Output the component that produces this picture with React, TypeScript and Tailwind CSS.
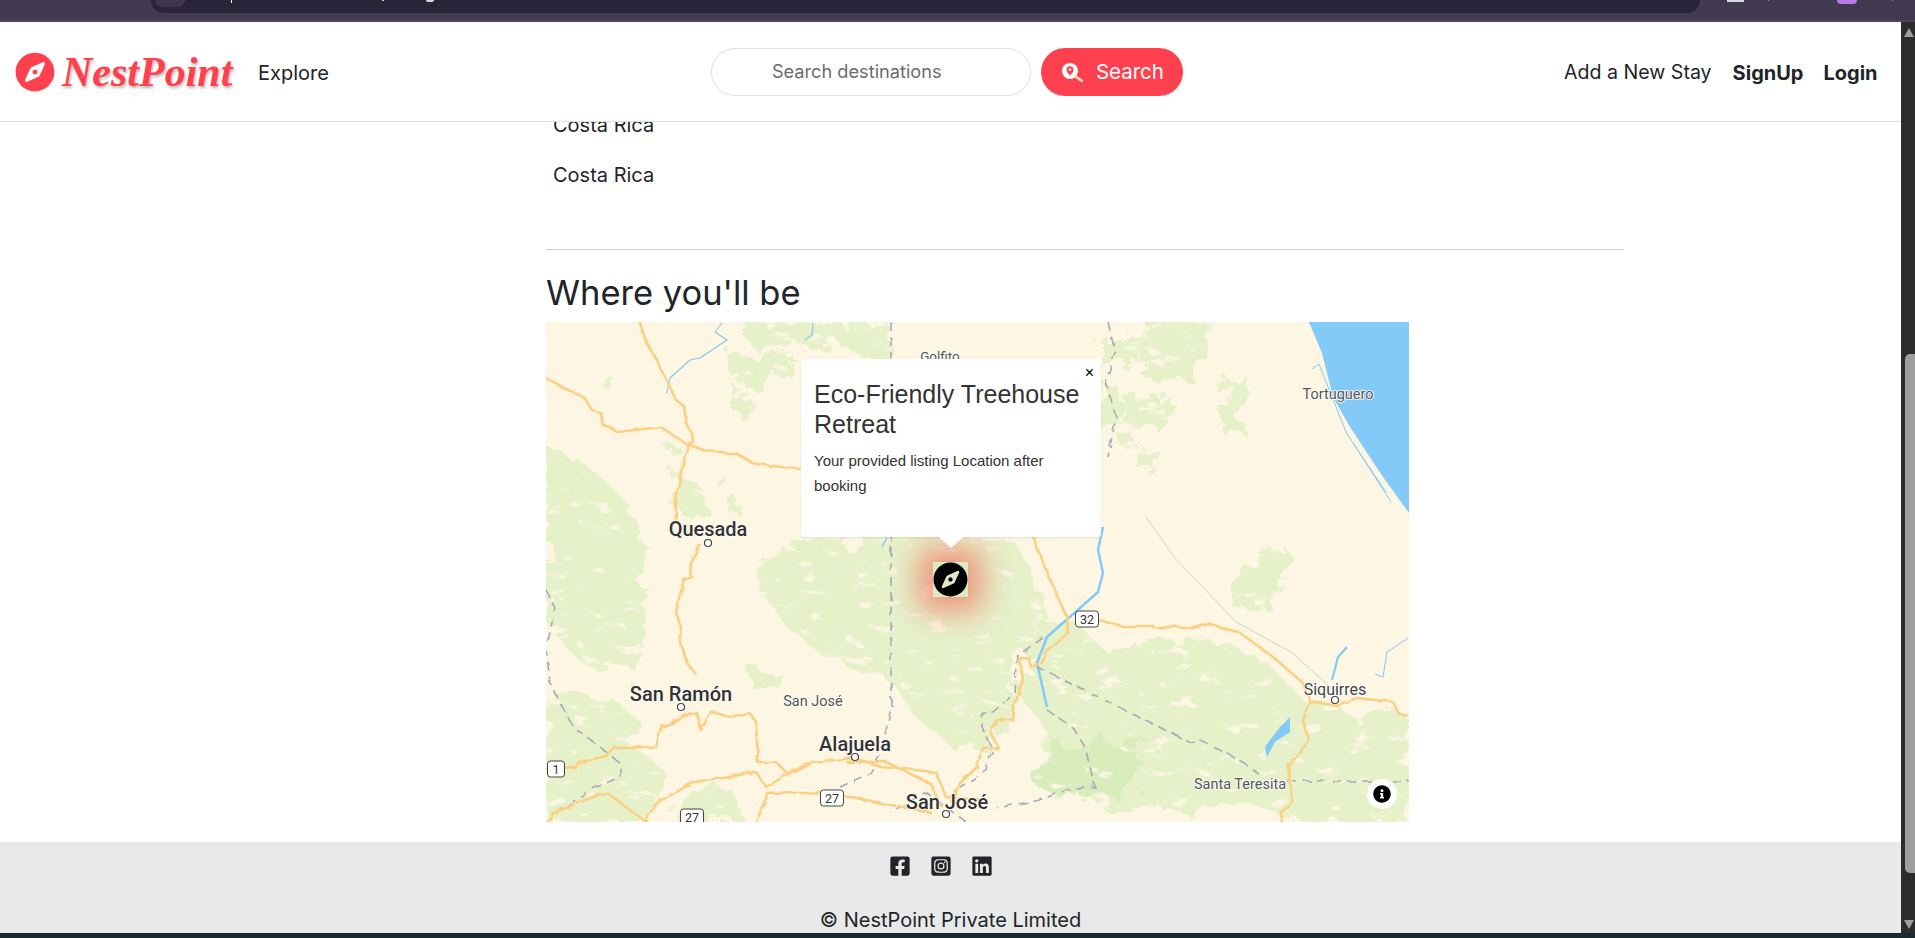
import React from "react";
import {
  FaCompass,
  FaFacebookSquare,
  FaInfoCircle,
  FaInstagramSquare,
  FaLinkedin,
} from "react-icons/fa";

// map drawing, coordinates are local to the 863x500 map box
const greens = [
  "0,125 30,135 60,160 85,185 100,225 95,270 100,310 85,345 70,355 40,345 15,320 0,300",
  "0,385 25,365 50,375 75,385 95,400 80,420 110,440 120,470 90,500 0,500",
  "181,31 247,31 240,50 210,65 190,60",
  "194,1 294,1 280,20 240,28 205,25",
  "190,68 200,68 200,95 190,95",
  "277,1 345,1 345,38 300,30",
  "60,55 68,55 68,68 60,68",
  "120,120 130,120 132,128 122,130",
  "168,152 178,152 176,162 168,162",
  "184,180 196,180 198,195 186,195",
  "210,235 270,215 300,222 345,205 385,200 415,215 470,220 495,270 500,310 470,340 465,400 440,425 400,420 370,395 345,360 320,350 280,335 240,305 215,270",
  "554,18 597,18 597,42 554,42",
  "597,0 664,0 660,30 640,58 600,58",
  "554,60 572,60 575,100 554,110",
  "679,55 704,55 700,85 682,85",
  "674,86 697,86 697,111 674,111",
  "574,78 627,78 625,105 580,105",
  "591,125 609,125 609,148 591,148",
  "576,116 590,116 590,128 578,128",
  "495,300 530,300 560,330 600,320 660,315 720,340 760,380 863,395 863,500 745,500 700,480 640,490 560,490 540,470 500,450 495,400 470,370",
  "130,150 160,170 150,200 125,185",
  "205,345 230,345 235,365 210,370",
  "130,475 185,465 200,500 125,500",
  "690,250 740,225 750,240 720,285 690,290",
  "270,250 300,240 320,280 285,290",
];

const darkGreens = ["508,425 600,415 590,465 530,480 490,465"];

const roads = [
  "94,0 100,20 112,40 122,62 130,78 138,84 140,100 146,112 147,120 142,122",
  "0,56 25,70 38,75 46,88 56,92 56,102 72,110 115,105 140,122 160,128 190,132 210,142 255,147 300,150",
  "142,122 135,150 130,180 130,195 128,202",
  "155,222 144,240 146,255 138,258 132,280 130,290 136,310 134,320 140,340 150,352",
  "0,447 30,445 35,440 60,434 68,425 110,425 115,405 140,395 150,390 155,408 165,390 185,395 205,392 210,400 212,440 230,440 242,452",
  "100,500 108,482 145,462 210,450 220,465 242,452 265,440 310,436 335,445 390,450 400,475 440,478",
  "210,500 222,472 280,470 340,482 385,490",
  "300,440 340,440 385,462 395,485",
  "487,215 497,241 521,296 522,311 500,331 494,341 484,345 483,335 474,338 477,358 467,388 466,398 451,398 444,408 452,425 437,426 431,445 414,461 405,480",
  "553,298 577,305 647,305 661,301 694,311 727,335 757,361 764,380 791,383 811,376 847,380 854,393 863,394",
  "764,381 757,398 762,418 742,445 747,481 734,491 736,500",
  "0,500 10,490 60,470 100,500",
];

const rivers = [
  { d: "176,1 169,10 181,18 154,36 144,38 124,56 121,71", w: 1.2 },
  { d: "267,1 266,13 259,18", w: 1.2 },
  { d: "341,215 336,225", w: 1.5 },
  { d: "557,205 552,228 557,251 552,270 534,286 501,315 491,341 501,385", w: 2.5 },
  { d: "801,325 792,335 786,358", w: 2.2 },
  { d: "862,316 841,330 837,355 829,352", w: 1 },
  { d: "766,47 773,42 800,110 845,180", w: 1 },
  { d: "807,121 840,170", w: 1 },
];

const borders = [
  "345,0 345,391 337,428 324,451 294,465",
  "562,0 569,30 560,60 570,95 562,135",
  "491,345 644,420 654,418 681,431 704,445 717,456",
  "741,459 863,459",
  "501,388 527,406 539,425 549,465 521,468 494,478 451,486",
  "497,316 472,333 469,371 447,390 436,390 436,405 447,428 437,451 414,465",
  "0,268 9,285 4,311 0,325 4,361 27,405 54,425 74,441 74,455 44,468 4,495",
  "420,500 380,470 345,490",
];

const dots = [
  [162, 221],
  [135, 385],
  [309, 435],
  [400, 492],
  [789, 378],
];

const shields = [
  { x: 10, y: 447, label: "1", w: 17 },
  { x: 286, y: 476, label: "27", w: 23 },
  { x: 146, y: 495, label: "27", w: 23 },
  { x: 541, y: 297, label: "32", w: 23 },
];

const labels = [
  { x: 162, y: 214, t: "Quesada", s: 20, w: 500, c: "#333333" },
  { x: 135, y: 379, t: "San Ramón", s: 20, w: 500, c: "#333333" },
  { x: 267, y: 384, t: "San José", s: 14.5, w: 400, c: "#555555" },
  { x: 309, y: 429, t: "Alajuela", s: 20, w: 500, c: "#333333" },
  { x: 401, y: 487, t: "San José", s: 20, w: 500, c: "#333333" },
  { x: 789, y: 373, t: "Siquirres", s: 16, w: 400, c: "#444444" },
  { x: 694, y: 467, t: "Santa Teresita", s: 14.5, w: 400, c: "#555555" },
  { x: 792, y: 77, t: "Tortuguero", s: 14.5, w: 400, c: "#555555" },
  { x: 394, y: 39, t: "Golfito", s: 13.5, w: 400, c: "#555555" },
];

function MapArt() {
  return (
    <svg width="863" height="500" viewBox="0 0 863 500" className="block">
      <defs>
        {/* ragged terrain edges with cream streaks showing through */}
        <filter id="rough" x="-5%" y="-5%" width="110%" height="110%" colorInterpolationFilters="sRGB">
          <feTurbulence type="fractalNoise" baseFrequency="0.05" numOctaves="4" seed="4" result="n" />
          <feDisplacementMap in="SourceGraphic" in2="n" scale="34" result="d" />
          <feTurbulence type="fractalNoise" baseFrequency="0.04 0.09" numOctaves="4" seed="9" />
          <feColorMatrix values="0 0 0 0 0 0 0 0 0 0 0 0 0 0 0 0 0 0 9 -2.300" result="m" />
          <feComposite in="d" in2="m" operator="in" />
        </filter>
        <filter id="wiggle" x="-5%" y="-5%" width="110%" height="110%" colorInterpolationFilters="sRGB">
          <feTurbulence type="fractalNoise" baseFrequency="0.09" numOctaves="2" seed="2" />
          <feDisplacementMap in="SourceGraphic" scale="5" />
        </filter>
      </defs>
      <rect width="863" height="500" fill="#fcf6e3" />
      <g filter="url(#rough)" fill="#e6f1ca">
        {greens.map((p) => (
          <polygon key={p} points={p} />
        ))}
      </g>
      <g filter="url(#rough)" fill="#d9ecbc">
        {darkGreens.map((p) => (
          <polygon key={p} points={p} />
        ))}
      </g>
      <polygon points="763,0 776,31 787,75 804,105 837,155 863,191 863,0" fill="#84caf9" />
      <polygon points="744,395 734,405 724,418 719,425 721,435 729,420 744,410" fill="#84caf9" />
      <g fill="none" stroke="#84caf9" strokeLinejoin="round">
        {rivers.map((r) => (
          <polyline key={r.d} points={r.d} strokeWidth={r.w} />
        ))}
      </g>
      <polyline points="600,195 628,235 690,300 745,330 790,370" fill="none" stroke="#c9c9c0" strokeWidth="0.8" />
      <g filter="url(#wiggle)" fill="none" stroke="#a9a8b8" strokeWidth="1.6" strokeDasharray="9 6">
        {borders.map((p) => (
          <polyline key={p} points={p} />
        ))}
      </g>
      <g filter="url(#wiggle)" fill="none" stroke="#fbd083" strokeWidth="2.6" strokeLinejoin="round">
        {roads.map((p) => (
          <polyline key={p} points={p} />
        ))}
      </g>
      {dots.map(([x, y]) => (
        <circle key={`${x}-${y}`} cx={x} cy={y} r="3.5" fill="#ffffff" stroke="#444444" strokeWidth="1.2" />
      ))}
      {shields.map((s) => (
        <g key={`${s.x}-${s.y}`}>
          <rect x={s.x - s.w / 2} y={s.y - 8} width={s.w} height="16" rx="3" fill="#ffffff" stroke="#444444" />
          <text x={s.x} y={s.y + 4.5} textAnchor="middle" fontSize="12.5" fontFamily="Roboto, sans-serif" fill="#333333">
            {s.label}
          </text>
        </g>
      ))}
      {labels.map((l) => (
        <text
          key={`${l.t}-${l.x}`}
          x={l.x}
          y={l.y}
          textAnchor="middle"
          fontSize={l.s}
          fontWeight={l.w}
          fontFamily="Roboto, sans-serif"
          fill={l.c}
          stroke="#ffffff"
          strokeWidth="1.6"
          paintOrder="stroke"
        >
          {l.t}
        </text>
      ))}
    </svg>
  );
}

function SearchPin() {
  return (
    <svg width="21" height="19" viewBox="0 0 21 19" className="shrink-0">
      <circle cx="8" cy="8" r="8" fill="#ffffff" />
      <line x1="13" y1="13" x2="20" y2="18" stroke="#ffe9c9" strokeWidth="2.4" strokeLinecap="round" />
      <path d="M8 3.2a3.5 3.5 0 0 0-3.5 3.5C4.500 9.200 8 12.500 8 12.500s3.500-3.300 3.500-5.800A3.500 3.500 0 0 0 8 3.200z" fill="#ff414f" />
      <circle cx="8" cy="6.700" r="1.300" fill="#ffffff" />
    </svg>
  );
}

export default function App() {
  return (
    <div className="flex h-[938px] w-[1915px] flex-col overflow-hidden bg-white font-['Inter',sans-serif] text-[#212529]">
      {/* browser chrome strip */}
      <div className="relative h-[22px] shrink-0 border-b-2 border-[#4a4458] bg-[#413950]">
        <div className="ml-[151px] h-[13px] w-[1549px] rounded-b-[13px] bg-[#2a2438]">
          <div className="ml-[4px] h-[7px] w-[30px] rounded-b-full bg-[#3f3750]" />
        </div>
        <div className="absolute left-[231px] top-0 h-[3px] w-[1px] bg-white" />
        <div className="absolute left-[382px] top-0 h-[1px] w-[2px] bg-[#d8c9a0]" />
        <div className="absolute left-[426px] top-0 h-[2px] w-[8px] rounded-b-full bg-[#d8d8d8]" />
        <div className="absolute left-[1727px] top-0 h-[2px] w-[17px] bg-[#d8d8e0]" />
        <div className="absolute left-[1768px] top-0 h-[1px] w-[1px] bg-[#9a95a5]" />
        <div className="absolute left-[1837px] top-0 h-[4px] w-[20px] rounded-b-full bg-[#b57be8]" />
        <div className="absolute left-[1892px] top-0 h-[1px] w-[1px] bg-[#9a95a5]" />
      </div>

      <div className="flex min-h-0 flex-1">
        <div className="flex min-w-0 flex-1 flex-col">
          {/* navbar */}
          <nav className="relative z-10 flex h-[100px] shrink-0 items-center border-b border-[#dedede] bg-white pl-[15px]">
            <FaCompass className="h-[40px] w-[40px] text-[#ff414f]" />
            <span className="ml-[7px] w-[196px] whitespace-nowrap text-[42px] font-bold italic leading-none text-[#ff414f] [font-family:'Liberation_Serif',serif] [text-shadow:1px_2px_3px_rgba(0,0,0,0.3)]">
              NestPoint
            </span>
            <a className="mt-[2px] text-[20px]">Explore</a>
            <div className="ml-[382px] flex h-[48px] w-[320px] items-center rounded-full border border-[#dfdfdf] pl-[60px] pt-[1px] text-[18.200px] text-[#6c6c6c]">
              Search destinations
            </div>
            <button className="ml-[10px] flex h-[48px] w-[142px] items-center rounded-full bg-[#ff414f] pl-[21px] pt-[1px] text-[20.500px] text-white">
              <SearchPin />
              <span className="ml-[13px]">Search</span>
            </button>
            <a className="ml-[381px] mt-[2px] whitespace-nowrap text-[19.600px]">Add a New Stay</a>
            <a className="ml-[21px] mt-[2px] text-[20px] font-bold">SignUp</a>
            <a className="ml-[20px] mt-[2px] text-[20px] font-bold">Login</a>
          </nav>

          {/* page content, scrolled */}
          <main className="relative min-h-0 flex-1 overflow-hidden">
            <div className="-mt-[22px] ml-[546px] w-[1078px]">
              <p className="pl-[7px] text-[20px] leading-[50px]">Costa Rica</p>
              <p className="pl-[7px] text-[20px] leading-[50px]">Costa Rica</p>
              <hr className="mt-[49px] border-[#cccccc]" />
              <h2 className="mt-[21px] text-[34.500px] font-normal leading-[43px]">Where you'll be</h2>
              <div className="relative mt-[8px] h-[500px] w-[863px] overflow-hidden">
                <MapArt />
                {/* marker */}
                <div className="absolute left-[387px] top-[240px] flex h-[35px] w-[35px] items-center justify-center bg-[#dfe9bf] shadow-[0_0_30px_14px_rgba(240,110,90,0.7)]">
                  <FaCompass className="h-[35px] w-[35px] text-black" />
                </div>
                {/* popup */}
                <div className="absolute left-[255px] top-[37px] h-[178px] w-[300px] rounded-[3px] bg-white px-[13px] pt-[20px] text-[#333333] shadow-[0_1px_2px_rgba(0,0,0,0.1)] [font-family:'Liberation_Sans',sans-serif]">
                  <button className="absolute right-[7px] top-[5px] text-[16px] leading-[18px] text-black">×</button>
                  <h3 className="text-[25px] leading-[30px]">Eco-Friendly Treehouse Retreat</h3>
                  <p className="mt-[9px] text-[15px] leading-[25px]">Your provided listing Location after booking</p>
                </div>
                <div className="absolute left-[393px] top-[215px] h-0 w-0 border-x-[12px] border-t-[11px] border-x-transparent border-t-white" />
                {/* info button */}
                <div className="absolute left-[821px] top-[457px] flex h-[30px] w-[30px] items-center justify-center rounded-full bg-white">
                  <FaInfoCircle className="h-[18px] w-[18px] text-black" />
                </div>
              </div>
            </div>
            <footer className="mt-[20px] flex h-[91px] flex-col items-center bg-[#e9e9e9]">
              <div className="mt-[13px] flex gap-[19px] pr-[20px] text-[22px] text-[#212529]">
                <FaFacebookSquare />
                <FaInstagramSquare />
                <FaLinkedin />
              </div>
              <p className="mt-[31px] whitespace-nowrap text-[20px] leading-[24px]">© NestPoint Private Limited</p>
            </footer>
          </main>
        </div>

        {/* scrollbar */}
        <div className="relative w-[14px] shrink-0 bg-[#2c2c2c]">
          <div className="absolute left-[4px] top-[332px] h-[519px] w-[10px] rounded-l-[5px] bg-[#9f9f9f]" />
          <div className="absolute left-[3px] top-[6px] h-0 w-0 border-x-[5.500px] border-b-[9px] border-x-transparent border-b-[#9f9f9f]" />
          <div className="absolute bottom-[4px] left-[3px] h-0 w-0 border-x-[5.500px] border-t-[9px] border-x-transparent border-t-[#9f9f9f]" />
        </div>
      </div>

      <div className="h-[5px] shrink-0 bg-[#1a2a2e]" />
    </div>
  );
}
